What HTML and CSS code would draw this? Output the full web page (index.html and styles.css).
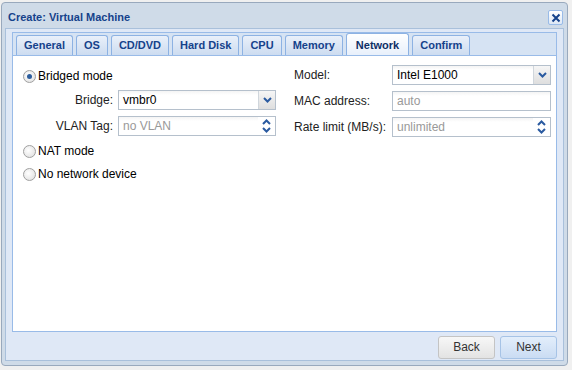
FILE: index.html
```html
<!DOCTYPE html>
<html lang="en">
<head>
  <meta charset="UTF-8">
  <title>Create: Virtual Machine</title>
  <link rel="stylesheet" href="styles.css">
</head>
<body>
  <div class="window">
    <div class="header">
      <span class="title">Create: Virtual Machine</span>
      <span class="close">
        <svg width="10" height="10" viewBox="0 0 10 10"><path d="M1.5 1.5 L8.5 8.5 M8.5 1.5 L1.5 8.5" stroke="#15428b" stroke-width="2" fill="none"/></svg>
      </span>
    </div>
    <div class="frame">
      <div class="tabs">
        <div class="tab">General</div>
        <div class="tab">OS</div>
        <div class="tab">CD/DVD</div>
        <div class="tab">Hard Disk</div>
        <div class="tab">CPU</div>
        <div class="tab">Memory</div>
        <div class="tab active">Network</div>
        <div class="tab">Confirm</div>
      </div>
      <div class="panel">
        <div class="col-left">
          <div class="radio-row"><span class="radio checked"></span>Bridged mode</div>
          <div class="field-row">
            <label>Bridge:</label>
            <div class="field">
              <span class="value">vmbr0</span>
              <span class="trigger">
                <svg width="9" height="6" viewBox="0 0 9 6"><polyline points="1,1 4.5,4.5 8,1" stroke="#2a5aa0" stroke-width="2" fill="none"/></svg>
              </span>
            </div>
          </div>
          <div class="field-row vlan">
            <label>VLAN Tag:</label>
            <div class="field">
              <span class="value empty">no VLAN</span>
              <span class="spinner">
                <svg width="9" height="6" viewBox="0 0 9 6"><polyline points="1,5 4.5,1.5 8,5" stroke="#2a5aa0" stroke-width="2" fill="none"/></svg>
                <svg width="9" height="6" viewBox="0 0 9 6"><polyline points="1,1 4.5,4.5 8,1" stroke="#2a5aa0" stroke-width="2" fill="none"/></svg>
              </span>
            </div>
          </div>
          <div class="radio-row nat"><span class="radio"></span>NAT mode</div>
          <div class="radio-row nonet"><span class="radio"></span>No network device</div>
        </div>
        <div class="col-right">
          <div class="field-row">
            <label>Model:</label>
            <div class="field">
              <span class="value">Intel E1000</span>
              <span class="trigger">
                <svg width="9" height="6" viewBox="0 0 9 6"><polyline points="1,1 4.5,4.5 8,1" stroke="#2a5aa0" stroke-width="2" fill="none"/></svg>
              </span>
            </div>
          </div>
          <div class="field-row">
            <label>MAC address:</label>
            <div class="field">
              <span class="value empty">auto</span>
            </div>
          </div>
          <div class="field-row">
            <label>Rate limit (MB/s):</label>
            <div class="field">
              <span class="value empty">unlimited</span>
              <span class="spinner">
                <svg width="9" height="6" viewBox="0 0 9 6"><polyline points="1,5 4.5,1.5 8,5" stroke="#2a5aa0" stroke-width="2" fill="none"/></svg>
                <svg width="9" height="6" viewBox="0 0 9 6"><polyline points="1,1 4.5,4.5 8,1" stroke="#2a5aa0" stroke-width="2" fill="none"/></svg>
              </span>
            </div>
          </div>
        </div>
      </div>
      <div class="buttons">
        <button class="btn">Back</button>
        <button class="btn primary">Next</button>
      </div>
    </div>
  </div>
</body>
</html>
```

FILE: styles.css
```css
body {
  margin: 0;
  background-color: #f0f0f0;
  font-family: "Liberation Sans", Arial, sans-serif;
  font-size: 12px;
  color: #000;
}

.window {
  margin: 2px 2px 0 1px;
  width: 567px;
  height: 364px;
  border: 1px solid #99a9bd;
  border-radius: 4px;
  background-color: #cfdbe8;
  box-sizing: border-box;
  display: flex;
  flex-direction: column;
}

.header {
  height: 25px;
  display: flex;
  align-items: center;
  justify-content: space-between;
  padding: 0 4px 0 6px;
}

.title {
  font-weight: bold;
  font-size: 11px;
  color: #15428b;
  margin-top: 2px;
}

.close {
  width: 13px;
  height: 13px;
  border: 1px solid #99bbe8;
  border-radius: 2px;
  background: linear-gradient(#ffffff, #dde8f6);
  display: flex;
  align-items: center;
  justify-content: center;
  margin-top: 4px;
}

.frame {
  flex: 1;
  margin: 0 3px 4px 3px;
  border: 1px solid #a9c0db;
  background-color: #dfe8f6;
  display: flex;
  flex-direction: column;
  padding: 3px 6px 0 6px;
}

.tabs {
  display: flex;
  align-items: flex-end;
  gap: 3px;
  height: 23px;
  padding-left: 3px;
  border: 1px solid #99bbe8;
  border-bottom: none;
  background-color: #d6e3f3;
  box-sizing: border-box;
}

.tab {
  height: 19px;
  line-height: 19px;
  padding: 0 7px;
  border: 1px solid #8db2e3;
  border-bottom: none;
  border-radius: 3px 3px 0 0;
  background: linear-gradient(#e9f0fa, #cddcf0);
  font-size: 11px;
  font-weight: bold;
  color: #15428b;
}

.tab.active {
  height: 21px;
  line-height: 22px;
  background: linear-gradient(#ffffff, #e8f0fb);
  color: #0e2f66;
  padding: 0 9px;
}

.panel {
  height: 277px;
  background-color: #fff;
  border: 1px solid #99bbe8;
  box-sizing: border-box;
  display: flex;
  padding: 10px 0 0 10px;
}

.col-left {
  width: 271px;
}

.col-right {
  display: flex;
  flex-direction: column;
  gap: 6px;
  margin-top: -1px;
}

.radio-row {
  height: 20px;
  display: flex;
  align-items: center;
  gap: 2px;
}

.radio-row.nat {
  margin-top: 5px;
}

.radio-row.nonet {
  margin-top: 3px;
}

.radio {
  width: 11px;
  height: 11px;
  border: 1px solid #a0a0a0;
  border-radius: 50%;
  background: radial-gradient(circle at 40% 40%, #ffffff, #dcdcdc);
  display: flex;
  align-items: center;
  justify-content: center;
}

.radio.checked::after {
  content: "";
  width: 5px;
  height: 5px;
  border-radius: 50%;
  background-color: #2d5e9e;
}

.field-row {
  display: flex;
  align-items: center;
  height: 20px;
}

.col-left .field-row {
  margin-top: 4px;
}

.col-left .field-row.vlan {
  margin-top: 6px;
}

.col-left label {
  width: 90px;
  text-align: right;
  padding-right: 5px;
  color: #222;
}

.col-right label {
  width: 98px;
  color: #222;
}

.field {
  height: 20px;
  border: 1px solid #b5c0cc;
  box-sizing: border-box;
  background: linear-gradient(#f4f4f4, #ffffff 4px);
  display: flex;
  align-items: center;
}

.col-left .field {
  width: 158px;
}

.col-right .field {
  width: 159px;
}

.value {
  flex: 1;
  padding-left: 4px;
  color: #000;
}

.value.empty {
  color: #999;
}

.trigger, .spinner {
  width: 17px;
  height: 18px;
  box-sizing: border-box;
  border-left: 1px solid #d0d6dc;
  background: linear-gradient(#f6f6f6, #dedede);
  display: flex;
  align-items: center;
  justify-content: center;
}

.spinner {
  flex-direction: column;
  gap: 2px;
  background: #fff;
  border-left: none;
}

.buttons {
  flex: 1;
  display: flex;
  justify-content: flex-end;
  align-items: center;
  gap: 5px;
  padding-top: 2px;
}

.btn {
  width: 57px;
  height: 23px;
  font-family: "Liberation Sans", Arial, sans-serif;
  font-size: 12px;
  color: #333;
  border: 1px solid #c4c4c4;
  border-radius: 3px;
  background: linear-gradient(#f7f7f7, #e3e3e3);
  padding: 0;
}

.btn.primary {
  border-color: #a6c3e6;
  background: linear-gradient(#e3eefb, #cadcf3);
}
```
